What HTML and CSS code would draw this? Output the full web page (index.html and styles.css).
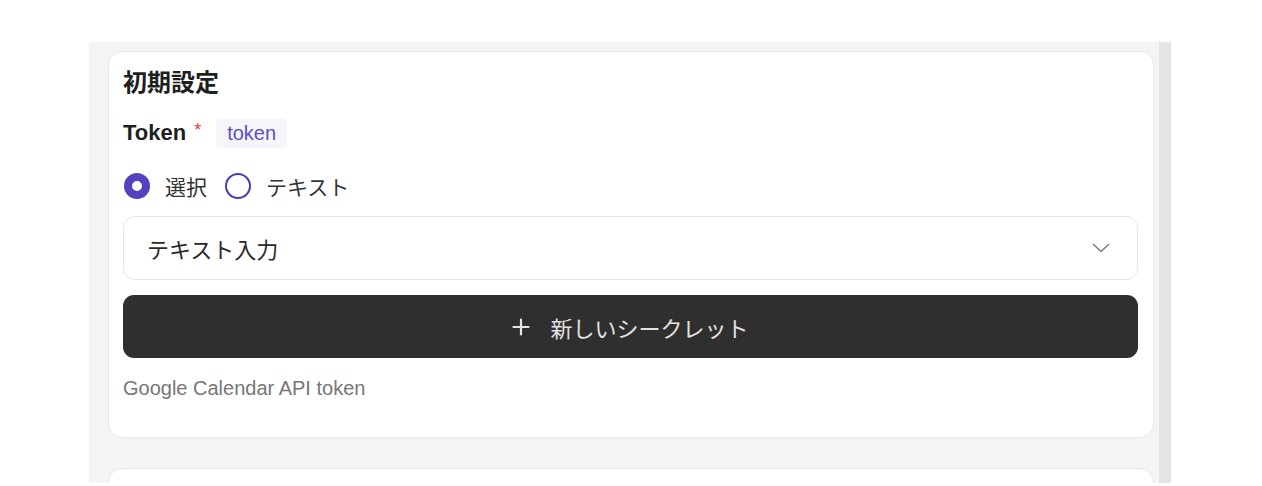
FILE: index.html
```html
<!DOCTYPE html>
<html>
<head>
	<meta charset="utf-8">
	<title>初期設定</title>
	<link rel="stylesheet" href="styles.css">
</head>
<body>
	<div class="panel">
		<div class="panel-body">
			<div class="card">
				<div class="card-title">初期設定</div>
				<div class="field-head">
					<span class="field-label">Token</span>
					<span class="required">*</span>
					<span class="badge">token</span>
				</div>
				<div class="radios">
					<label class="radio checked"><span class="dot"></span>選択</label>
					<label class="radio"><span class="dot"></span>テキスト</label>
				</div>
				<div class="select">
					<span>テキスト入力</span>
					<svg width="18" height="10" viewBox="0 0 18 10"><path d="M1.5 1.5l7.5 7 7.5-7" fill="none" stroke="#7c7c7c" stroke-width="1.6" stroke-linecap="round" stroke-linejoin="round"/></svg>
				</div>
				<div class="btn-secret">
					<svg width="18" height="18" viewBox="0 0 18 18"><path d="M9 1.5v15M1.5 9h15" stroke="#e6e6e6" stroke-width="2.2" stroke-linecap="round"/></svg>
					<span>新しいシークレット</span>
				</div>
				<div class="help">Google Calendar API token</div>
			</div>
			<div class="card card-next"></div>
		</div>
		<div class="scrollbar"></div>
	</div>
</body>
</html>
```

FILE: styles.css
```css
body {
	margin: 0;
	background: #fff;
	font-family: "Liberation Sans", "Noto Sans CJK JP", sans-serif;
	color: #222;
}

.panel {
	display: flex;
	margin: 42px 0 0 89px;
	width: 1082px;
	height: 441px;
	background: #f4f4f4;
	overflow: hidden;
}

.panel-body {
	flex: 1;
	padding: 9px 5px 0 19px;
}

.scrollbar {
	width: 12px;
	background: #e4e4e4;
}

.card {
	background: #fff;
	border: 1px solid #e6e6e6;
	border-radius: 14px;
	padding: 16px 15px 0 14px;
	height: 369px;
}

.card-next {
	margin-top: 30px;
	height: 40px;
}

.card-title {
	font-size: 24px;
	font-weight: bold;
	line-height: 30px;
	color: #1f1f1f;
}

.field-head {
	display: flex;
	align-items: center;
	margin-top: 19px;
	height: 32px;
}

.field-label {
	font-size: 22px;
	font-weight: bold;
	color: #1f1f1f;
}

.required {
	color: #e0413a;
	font-size: 18px;
	margin: -5px 0 0 8px;
}

.badge {
	margin-left: 15px;
	background: #f6f6fa;
	color: #5d4fc5;
	font-size: 20px;
	line-height: 29px;
	padding: 0 11px;
	border-radius: 4px;
}

.radios {
	display: flex;
	align-items: center;
	margin-top: 20px;
	height: 34px;
	font-size: 21px;
	color: #333;
}

.radio {
	display: flex;
	align-items: center;
	margin-right: 17px;
}

.dot {
	box-sizing: border-box;
	width: 26px;
	height: 26px;
	border: 2px solid #4b3bb0;
	border-radius: 50%;
	margin: 0 15px 0 1px;
}

.radio.checked .dot {
	border: 8px solid #5442c0;
}

.select {
	display: flex;
	align-items: center;
	justify-content: space-between;
	margin-top: 13px;
	height: 62px;
	border: 1px solid #e6e6e6;
	border-radius: 12px;
	padding: 0 27px 0 23px;
	font-size: 22px;
	color: #2a2a2a;
}

.btn-secret {
	display: flex;
	align-items: center;
	justify-content: center;
	gap: 20px;
	margin-top: 15px;
	height: 63px;
	background: #2f2f2f;
	border-radius: 11px;
	color: #e2e2e2;
	font-size: 22px;
}

.help {
	margin-top: 20px;
	font-size: 20px;
	line-height: 20px;
	color: #767676;
}
```
